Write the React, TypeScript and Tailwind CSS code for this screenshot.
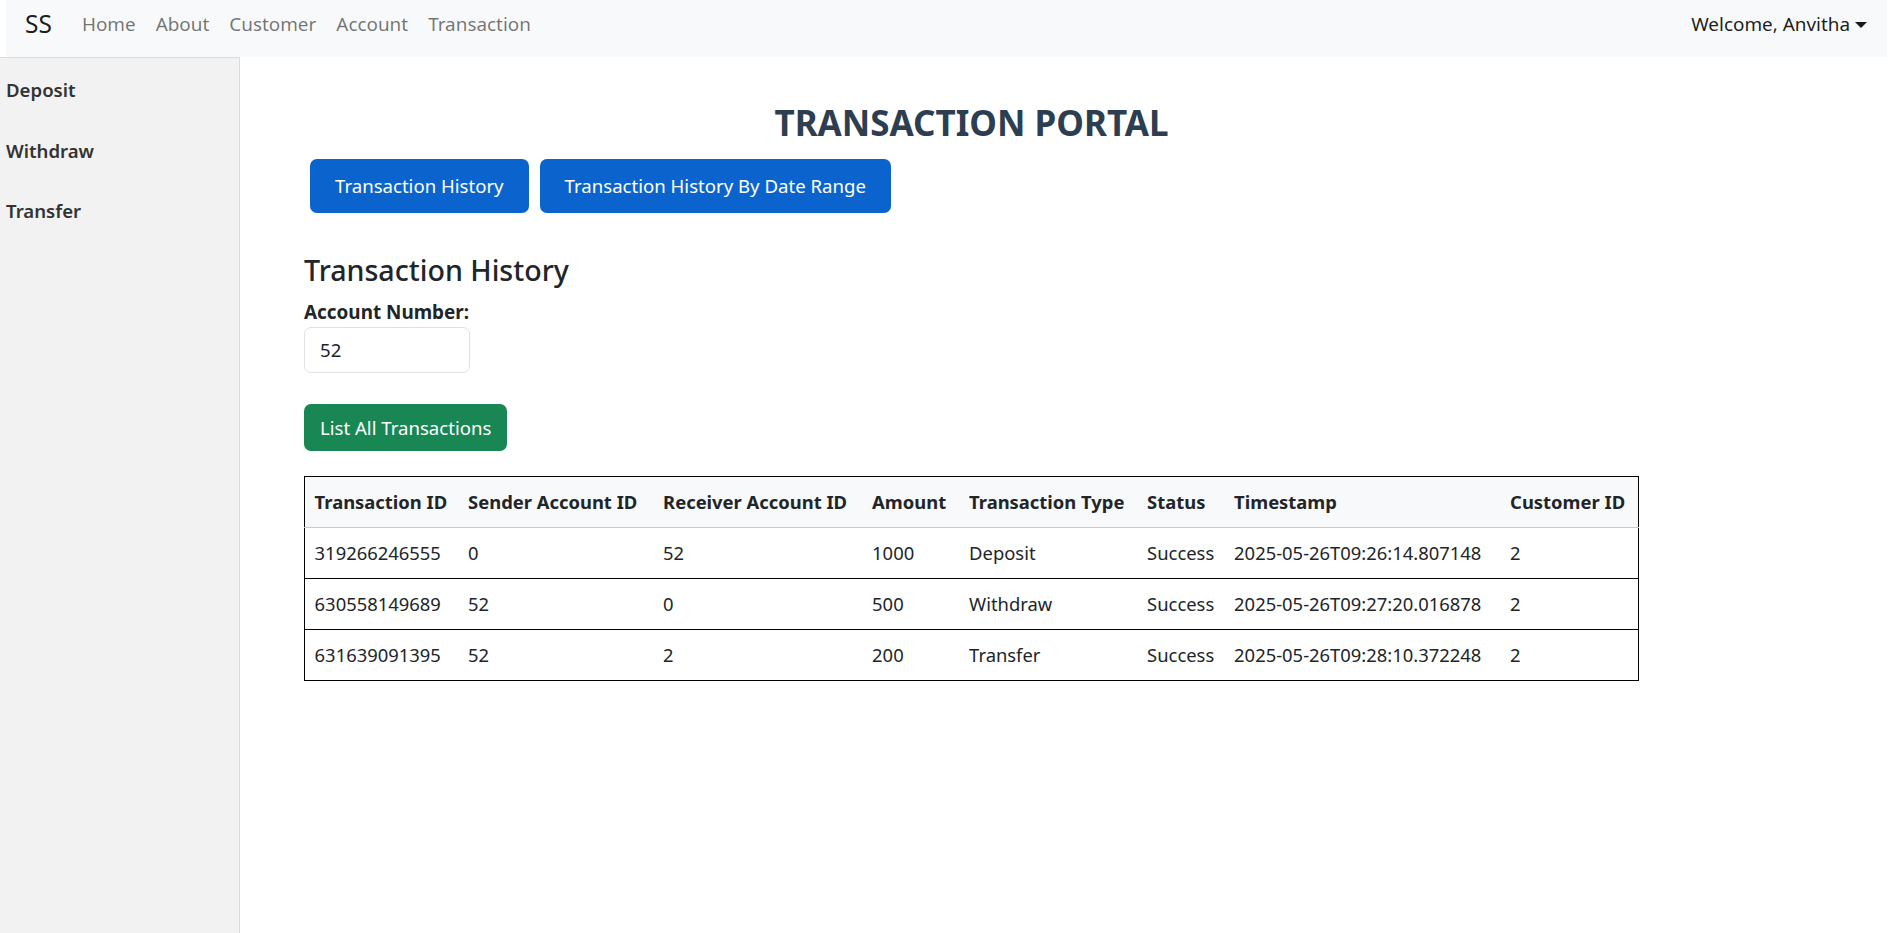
import React from "react";

const navLinks = ["Home", "About", "Customer", "Account", "Transaction"];

const columns = [
  { label: "Transaction ID", w: "w-[154px]" },
  { label: "Sender Account ID", w: "w-[195px]" },
  { label: "Receiver Account ID", w: "w-[209px]" },
  { label: "Amount", w: "w-[97px]" },
  { label: "Transaction Type", w: "w-[178px]" },
  { label: "Status", w: "w-[87px]" },
  { label: "Timestamp", w: "w-[276px]" },
  { label: "Customer ID", w: "w-[138px]" },
];

const rows = [
  ["319266246555", "0", "52", "1000", "Deposit", "Success", "2025-05-26T09:26:14.807148", "2"],
  ["630558149689", "52", "0", "500", "Withdraw", "Success", "2025-05-26T09:27:20.016878", "2"],
  ["631639091395", "52", "2", "200", "Transfer", "Success", "2025-05-26T09:28:10.372248", "2"],
];

export default function App() {
  return (
    <div className="flex h-[933px] flex-col overflow-hidden bg-white font-['Noto_Sans',sans-serif] text-[#212529]">
      <nav className="ml-[6px] mr-[14px] flex h-[57px] shrink-0 items-center bg-[#f8f9fa] pb-[8px] pl-[19px] pr-[20px]">
        <span className="mr-[20px] text-[24.5px] leading-none text-black/90">SS</span>
        <div className="flex">
          {navLinks.map((l) => (
            <a key={l} className="px-[10px] text-[18.9px] text-black/55">
              {l}
            </a>
          ))}
        </div>
        <div className="ml-auto flex items-center text-[18.9px] text-black/90">
          Welcome, Anvitha
          <span className="ml-[5px] mt-[2px] h-0 w-0 border-x-[6px] border-t-[6px] border-x-transparent border-t-black/90" />
        </div>
      </nav>

      <div className="flex flex-1">
        <aside className="w-[240px] shrink-0 border-r border-t border-[#dcdcdc] bg-[#f2f2f2] pt-[2px]">
          {["Deposit", "Withdraw", "Transfer"].map((s) => (
            <div key={s} className="flex h-[60.5px] items-center pl-[6px] text-[18.6px] font-semibold text-[#333]">
              {s}
            </div>
          ))}
        </aside>

        <main className="flex-1 pl-[64px] pt-[43px]">
          <div className="w-[1335px]">
            <h1 className="text-center text-[35px] font-bold leading-[46px] text-[#2c3e50]">TRANSACTION PORTAL</h1>
            <div className="ml-[6px] mt-[13px] flex gap-[11px]">
              <button className="h-[54px] rounded-[7px] bg-[#0b64ce] px-[25px] text-[18.6px] text-white">
                Transaction History
              </button>
              <button className="h-[54px] rounded-[7px] bg-[#0b64ce] px-[25px] text-[18.6px] text-white">
                Transaction History By Date Range
              </button>
            </div>

            <h2 className="mt-[39px] text-[28.6px] font-medium leading-[36px] text-[#212529]">Transaction History</h2>
            <label className="mt-[11px] block text-[18.9px] font-bold leading-[26px]">Account Number:</label>
            <div className="mt-[2px] flex h-[46px] w-[166px] items-center rounded-[7px] border border-[#dee2e6] bg-white px-[15px] text-[18.6px]">
              52
            </div>

            <button className="mt-[31px] h-[47px] rounded-[7px] bg-[#198754] px-[16px] text-[18.6px] text-white">
              List All Transactions
            </button>

            <table className="mt-[25px] w-[1335px] table-fixed border-collapse border border-black text-left text-[18.4px]">
              <colgroup>
                {columns.map((c) => (
                  <col key={c.label} className={c.w} />
                ))}
              </colgroup>
              <thead>
                <tr className="h-[51px] border-b border-[#c8cacc] bg-[#f8f9fa]">
                  {columns.map((c) => (
                    <th key={c.label} className="whitespace-nowrap px-[9.6px] font-bold">
                      {c.label}
                    </th>
                  ))}
                </tr>
              </thead>
              <tbody>
                {rows.map((r) => (
                  <tr key={r[0]} className="h-[51px] border-b border-black">
                    {r.map((v, i) => (
                      <td key={i} className="h-[51px] whitespace-nowrap px-[9.6px]">
                        {v}
                      </td>
                    ))}
                  </tr>
                ))}
              </tbody>
            </table>
          </div>
        </main>
      </div>
    </div>
  );
}
